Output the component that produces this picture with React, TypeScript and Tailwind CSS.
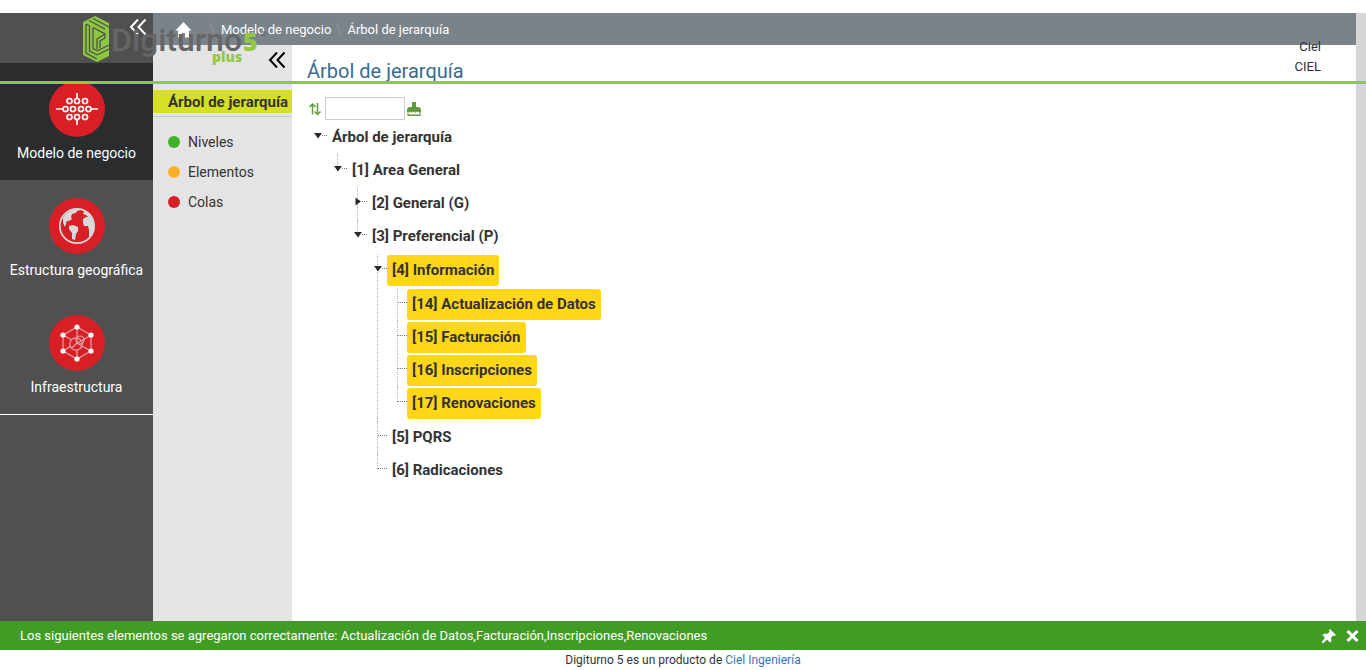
import React from "react";

type TreeNode = { label: string; state?: "open" | "closed"; marked?: boolean; children?: TreeNode[] };

const tree: TreeNode = {
  label: "Árbol de jerarquía",
  state: "open",
  children: [
    {
      label: "[1] Area General",
      state: "open",
      children: [
        { label: "[2] General (G)", state: "closed" },
        {
          label: "[3] Preferencial (P)",
          state: "open",
          children: [
            {
              label: "[4] Información",
              state: "open",
              marked: true,
              children: [
                { label: "[14] Actualización de Datos", marked: true },
                { label: "[15] Facturación", marked: true },
                { label: "[16] Inscripciones", marked: true },
                { label: "[17] Renovaciones", marked: true },
              ],
            },
            { label: "[5] PQRS" },
            { label: "[6] Radicaciones" },
          ],
        },
      ],
    },
  ],
};

function Branch({ node, depth, last }: { node: TreeNode; depth: number; last: boolean }) {
  const rail = depth === 0 ? "" : last
    ? "before:absolute before:left-0 before:top-0 before:h-3 before:border-l before:border-dotted before:border-[#b0b0b0]"
    : "before:absolute before:left-0 before:top-0 before:h-full before:border-l before:border-dotted before:border-[#b0b0b0]";
  return (
    <li className={`relative ${rail}`}>
      <div className="flex h-[33px] items-center">
        <span className="flex w-[10px] items-center">
          {node.state ? (
            <button type="button" aria-label={`Alternar ${node.label}`} className="relative -ml-[3px] mb-1 shrink-0">
              <svg width="8" height="9" viewBox="0 0 8 9" fill="#2b2b2b">
                {node.state === "open" ? <path d="M0 2h8L4 7.500z" /> : <path d="M1.500 0.500v8L7 4.500z" />}
              </svg>
            </button>
          ) : null}
          <span className="mb-1 grow border-t border-dotted border-[#777]" />
        </span>
        <span className={`flex h-[31px] items-center rounded-[3px] px-[5px] text-[15px] font-bold text-[#333] ${node.marked ? "bg-[#ffd618]" : ""}`}>
          {node.label}
        </span>
      </div>
      {node.children ? (
        <ul className={`pl-5 ${depth >= 2 ? "py-px" : ""}`}>
          {node.children.map((c, i) => (
            <Branch key={c.label} node={c} depth={depth + 1} last={i === node.children!.length - 1} />
          ))}
        </ul>
      ) : null}
    </li>
  );
}

function ModelIcon() {
  const dots = [[20.5, 20], [28, 20], [36, 20], [16.5, 28], [24, 28], [32, 28], [39.5, 28], [20.5, 36], [28, 36], [36, 36]];
  return (
    <svg width="56" height="56" viewBox="0 0 56 56" fill="none" stroke="#fff" strokeWidth="1.7">
      {dots.map(([x, y]) => <circle key={`${x}-${y}`} cx={x} cy={y} r="2.5" />)}
      <path d="M28 12v5.5M28 38.5V44M7 28h7M42 28h7" />
    </svg>
  );
}

function GlobeIcon() {
  return (
    <svg width="56" height="56" viewBox="0 0 56 56">
      <circle cx="28" cy="28" r="17.2" fill="none" stroke="#d8d8d8" strokeWidth="1.7" />
      <g fill="#d8d8d8">
        <path d="M14 20C18 13 24 11 29 11l3 1-4 1-1 2-4 1-1 3 1 2-3 2-2 0-1 3-1 3-2-4z" />
        <path d="M20 28l4-1 5 2 0 4-2 3-1 6-3-1-0-6-3-4z" />
        <path d="M35 13l5 2 2 4-3 0-2-2-3-1zM34 21l3-2 5 0 3 6-0 8-3 5-2 1 0-7-1-4-4-0-1-3z" />
      </g>
    </svg>
  );
}

function InfraIcon() {
  const nodes = [[28, 12], [42, 20], [42, 36], [28, 44], [14, 36], [14, 20]];
  return (
    <svg width="56" height="56" viewBox="0 0 56 56" fill="none" stroke="#dfa5a8" strokeWidth="1.2">
      <path d="M28 12l14 8v16l-14 8-14-8V20zM28 12v9M42 20l-8 5M42 36l-9-5M28 44v-9M14 36l8-5M14 20l9 5M28 21v7l-5 5M28 28l6-3M28 28l5 3" />
      <circle cx="27" cy="29" r="6.2" />
      <circle cx="31" cy="25" r="4" />
      {nodes.map(([x, y]) => <circle key={`${x}-${y}`} cx={x} cy={y} r="2.6" fill="#fff" stroke="none" />)}
    </svg>
  );
}

function LogoMark() {
  return (
    <svg width="28" height="48" viewBox="0 0 28 48">
      <path d="M13 1L27 8V41L15 47 1 40V7z" fill="#8dc63f" />
      <path d="M4 9v29l11 6M7.500 11v25l8 4M11 12.500v21l4 2M7 5.500L23 14M11 3.500L27 12M11 12.500l12 6.500v4M15 34V24l8-5M18 33v-7l5-3M15 40l12-6M15 36l12-6M4 9l4 2" fill="none" stroke="#505050" strokeWidth="1.300" />
    </svg>
  );
}

function Chevrons() {
  return (
    <svg width="18" height="18" viewBox="0 0 18 18" fill="none" stroke="currentColor" strokeWidth="2">
      <path d="M9 1.500L2 9l7 7.500M16.500 1.500L9.500 9l7 7.500" />
    </svg>
  );
}

const modules = [
  { label: "Modelo de negocio", icon: <ModelIcon />, active: true },
  { label: "Estructura geográfica", icon: <GlobeIcon />, active: false },
  { label: "Infraestructura", icon: <InfraIcon />, active: false },
];

const sections = [
  { label: "Niveles", dot: "bg-[#43b02a]" },
  { label: "Elementos", dot: "bg-[#fdb027]" },
  { label: "Colas", dot: "bg-[#d91f26]" },
];

export default function App() {
  return (
    <div className="relative flex min-h-screen flex-col bg-white pt-[13px] font-['Roboto',sans-serif] text-[#333]">
      <header className="pointer-events-none absolute inset-x-0 top-0 z-10 flex h-[84px] items-start justify-between border-b-3 border-[#92c83e] pl-[82px] pr-[45px]">
        <div className="flex pt-[15px]">
          <LogoMark />
          <div className="flex flex-col pl-px pt-[7px]">
            <div className="flex items-baseline leading-[36px]">
              <span className="text-[32px] font-medium text-[#666]">Digiturno</span>
              <span className="pl-px font-['Open_Sans',sans-serif] text-[25px] leading-[30px] font-extrabold text-[#92c83e]">5</span>
              <span className="self-start pl-[3px] text-[8px] leading-[26px] text-[#666]">®</span>
            </div>
            <span className="-mt-[10px] pl-[101px] font-['Open_Sans',sans-serif] text-[14px] leading-[18px] font-extrabold text-[#92c83e]">plus</span>
          </div>
        </div>
        <div className="pt-[37px] text-right text-[13px] leading-5 text-[#2b2d3a]">
          <p>Ciel</p>
          <p>CIEL</p>
        </div>
      </header>

      <div className="flex grow">
        <nav className="w-[153px] shrink-0 bg-[#505050]">
          <div className="flex h-[50px] items-start justify-end pr-[6px] pt-[5px] text-white">
            <button type="button" aria-label="Contraer módulos"><Chevrons /></button>
          </div>
          <div className="border-b border-white">
            {modules.map((m) => (
              <a key={m.label} href="#" className={`flex h-[117px] flex-col items-center pt-[18px] text-[14px] leading-5 text-white ${m.active ? "bg-[#2b2c2e]" : ""}`}>
                <span className="mb-[6px] rounded-full bg-[#d91f26]">{m.icon}</span>
                {m.label}
              </a>
            ))}
          </div>
        </nav>

        <div className="flex min-w-0 grow flex-col">
          <div className="flex h-8 items-center bg-[#7b838a] pl-[22px] pt-px text-[13px] text-white">
            <a href="#" aria-label="Inicio">
              <svg width="17" height="16" viewBox="0 0 17 16" fill="#fff"><path d="M8.500 0L16.500 8.500h-2.500V15.500h-4v-4.500h-3v4.500h-4V8.500H0.500z" /></svg>
            </a>
            <svg className="ml-[18px] mr-[5px]" width="6" height="14" viewBox="0 0 6 14" stroke="#8f979d"><path d="M0.500 0.500l5 13" /></svg>
            <a href="#">Modelo de negocio</a>
            <svg className="mx-[5px]" width="6" height="14" viewBox="0 0 6 14" stroke="#8f979d"><path d="M0.500 0.500l5 13" /></svg>
            <a href="#">Árbol de jerarquía</a>
          </div>
          <div className="flex grow">
            <aside className="w-[139px] shrink-0 bg-[#e4e4e4]">
              <div className="flex h-[45px] items-start justify-end pr-[6px] pt-[6px] text-black">
                <button type="button" aria-label="Contraer secciones"><Chevrons /></button>
              </div>
              <div className="border-b border-[#c3c9ce] pb-[3px]">
                <h2 className="h-[23px] whitespace-nowrap bg-[#d5df23] pl-[15px] text-[15px] leading-6 font-bold text-[#333]">Árbol de jerarquía</h2>
              </div>
              <ul className="pt-[10px]">
                {sections.map((s) => (
                  <li key={s.label}>
                    <a href="#" className="flex h-[30px] items-center gap-2 pl-[15px] text-[14px]">
                      <span className={`size-3 rounded-full ${s.dot}`} />
                      {s.label}
                    </a>
                  </li>
                ))}
              </ul>
            </aside>

            <main className="grow pl-[15px]">
              <h1 className="pt-[14px] text-[20px] leading-6 text-[#3c6a8e]">Árbol de jerarquía</h1>
              <div className="flex items-center pt-[14px] pl-[2px]">
                <button type="button" aria-label="Ordenar">
                  <svg width="12" height="14" viewBox="0 0 12 14" fill="none" stroke="#5f9c3c" strokeWidth="1.500"><path d="M3.500 12.500V2M0.500 5l3-3 3 3M8.500 1v11M5.500 9.500l3 3 3-3" /></svg>
                </button>
                <input aria-label="Buscar" type="text" className="ml-1 mr-[2px] h-[23px] w-20 border border-[#ccc] bg-white px-1 text-[13px]" />
                <button type="button" aria-label="Limpiar">
                  <svg width="14" height="14" viewBox="0 0 14 14"><path d="M5 0h4v5h3l2 2v3h-.5v4H.5v-4H0V7l2-2h3z" fill="#5f9c3c" /><path d="M1.500 12.500V9.500l1 1 1-1 1 1.500 1-1.500 1 1 1-1 1 1.500 1-1.500 1 1 1-1 1 1.500v1.500z" fill="#fff" /></svg>
                </button>
              </div>
              <ul className="pl-[10px] pt-px">
                <Branch node={tree} depth={0} last />
              </ul>
            </main>
            <div className="-mt-8 w-[10px] shrink-0 bg-[#d6d6d6]" />
          </div>
        </div>
      </div>

      <div role="status" className="flex h-[29px] items-center bg-[#419c26] pl-5 pr-[7px] text-[13px] text-white">
        <p className="grow">Los siguientes elementos se agregaron correctamente: Actualización de Datos,Facturación,Inscripciones,Renovaciones</p>
        <button type="button" aria-label="Fijar">
          <svg width="14" height="14" viewBox="0 0 14 14" fill="#fff"><path d="M8 0l6 6-1.500 1-1.500-.5L9 9l.5 3L8 13.500 5 10.500 1.500 14H0v-1.500L3 9 0.500 6 2 4.500l3 .5L7.500 3 7 1.500z" /></svg>
        </button>
        <button type="button" aria-label="Cerrar" className="ml-[10px]">
          <svg width="13" height="12" viewBox="0 0 13 12" stroke="#fff" strokeWidth="3"><path d="M1.500 1l10 10M11.500 1l-10 10" /></svg>
        </button>
      </div>
      <footer className="text-center text-[12px] leading-5 text-[#333]">
        Digiturno 5 es un producto de <a href="#" className="text-[#337ab7]">Ciel Ingeniería</a>
      </footer>
    </div>
  );
}
